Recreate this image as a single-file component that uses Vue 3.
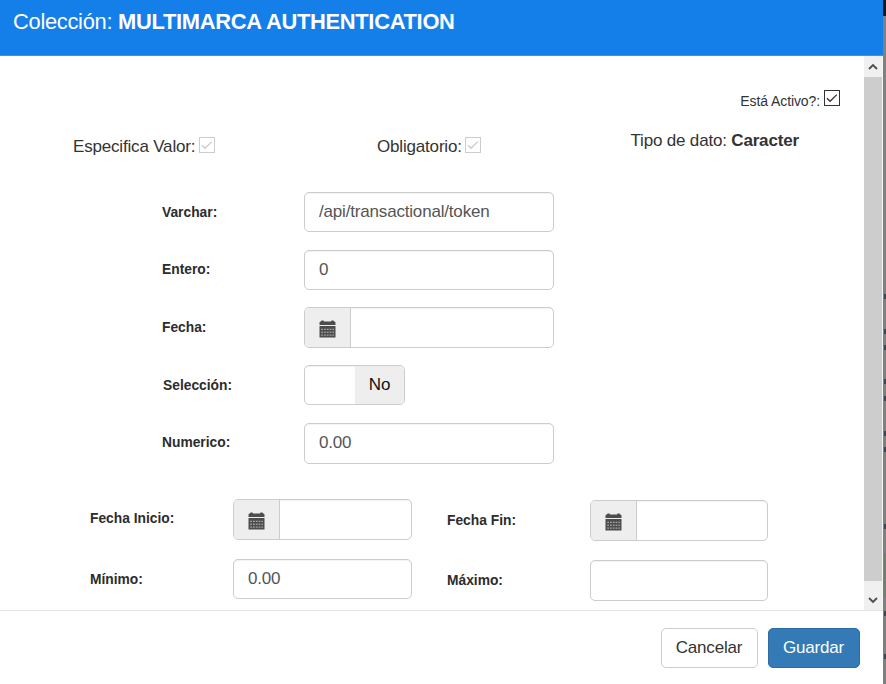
<script setup>
import { h } from 'vue'

const CalendarIcon = () =>
  h('svg', { width: 17, height: 18, viewBox: '0 0 17 18', fill: '#4d4d4d' }, [
    h('path', { d: 'M0.5 5V2.8Q0.5 1.5 1.8 1.5H2V1.2Q2 .4 3 .4H4Q5 .4 5 1.2V1.5H12V1.2Q12 .4 13 .4H14Q15 .4 15 1.2V1.5H15.2Q16.5 1.5 16.5 2.8V5Z' }),
    h('path', { d: 'M.5 6.1H16.5V17.5H.5Z' }),
    h('path', {
      d: 'M2.2 9.3H15M2.2 12.2H15M2.2 15.1H15',
      stroke: '#c4c4c4',
      'stroke-width': 0.9,
      'stroke-dasharray': '1.8 1',
      fill: 'none',
    }),
  ])

const CheckIcon = () =>
  h('svg', { width: 16, height: 16, viewBox: '0 0 16 16', fill: 'none', stroke: 'currentColor' }, [
    h('rect', { x: 0.5, y: 0.5, width: 15, height: 15 }),
    h('path', { d: 'M3 8.2L6.1 11.3L12.8 4.6', 'stroke-width': 1.3 }),
  ])

const backdropMarks = [296, 331, 347, 381, 398, 433, 449, 526, 571, 613, 656]
</script>

<template>
  <div class="page">
    <section class="modal">
      <header class="title"><span class="title-label">Colección:</span> <b>MULTIMARCA AUTHENTICATION</b></header>
      <div class="viewport">
        <main class="content">
          <div class="active"><span>Está Activo?:</span><CheckIcon class="check" /></div>
          <div class="flags">
            <div class="flag"><span>Especifica Valor:</span><CheckIcon class="check muted" /></div>
            <div class="flag required"><span>Obligatorio:</span><CheckIcon class="check muted" /></div>
            <div class="datatype">Tipo de dato: <b>Caracter</b></div>
          </div>
          <div class="fields">
            <label>Varchar:</label>
            <div class="control"><span class="value">/api/transactional/token</span></div>
            <label class="integer">Entero:</label>
            <div class="control"><span class="value">0</span></div>
            <label>Fecha:</label>
            <div class="control date tall"><i class="addon"><CalendarIcon /></i></div>
            <label class="selection">Selección:</label>
            <div class="control toggle"><span class="off">No</span></div>
            <label class="numeric">Numerico:</label>
            <div class="control tall"><span class="value">0.00</span></div>
          </div>
          <div class="ranges">
            <div class="range start">
              <label class="start-label">Fecha Inicio:</label>
              <div class="control date tall"><i class="addon"><CalendarIcon /></i></div>
              <label>Mínimo:</label>
              <div class="control"><span class="value">0.00</span></div>
            </div>
            <div class="range end">
              <label>Fecha Fin:</label>
              <div class="control date tall"><i class="addon"><CalendarIcon /></i></div>
              <label>Máximo:</label>
              <div class="control tall"></div>
            </div>
          </div>
        </main>
        <aside class="scrollbar">
          <div class="arrow up"><svg width="10" height="8" viewBox="0 0 10 8"><path d="M1 6L5 2L9 6" /></svg></div>
          <div class="thumb"></div>
          <div class="arrow down"><svg width="10" height="8" viewBox="0 0 10 8"><path d="M1 2L5 6L9 2" /></svg></div>
        </aside>
      </div>
      <footer class="actions">
        <button class="cancel">Cancelar</button>
        <button class="save">Guardar</button>
      </footer>
    </section>
    <svg class="backdrop" width="3" height="684" viewBox="0 0 3 684">
      <rect width="3" height="684" fill="#808080" />
      <rect width="3" height="16" fill="#17191e" />
      <rect v-for="y in backdropMarks" :key="y" x="1" :y="y - 2" width="2" height="5" fill="#42464d" />
      <rect x="1" y="553" width="2" height="44" fill="#71806c" />
    </svg>
  </div>
</template>

<style>
body { margin: 0; overflow: hidden; }
</style>

<style scoped>
* { box-sizing: border-box; }
.page {
  width: 886px;
  height: 684px;
  display: flex;
  overflow: hidden;
  background: #fff;
  color: #333;
  font: 17px/20px "Liberation Sans", Arial, sans-serif;
  letter-spacing: -0.18px;
}
.modal { width: 883px; display: flex; flex-direction: column; }
.title {
  height: 56px;
  padding: 9px 13px;
  background: #147ee9;
  border-bottom: 1px solid #3b90ea;
  color: #fff;
  font-size: 21.9px;
  line-height: 25px;
  letter-spacing: -0.3px;
  white-space: nowrap;
}
.viewport { height: 554px; display: flex; }
.content { width: 864px; overflow: hidden; }
.active {
  display: flex;
  justify-content: flex-end;
  gap: 4px;
  height: 60px;
  padding: 34px 24px 0 0;
  font-size: 14px;
  letter-spacing: -0.1px;
  line-height: 22px;
}
.check { flex: none; color: #333; }
.muted { color: #ccc; }
.flags { display: grid; grid-template-columns: 304px 253.5px 1fr; height: 76px; padding: 14px 0 0 73px; white-space: nowrap; }
.flag { display: flex; gap: 4px; padding-top: 7px; }
.required { gap: 3px; }
.flag span { line-height: 19px; }
.datatype { padding-top: 1px; }
.fields {
  display: grid;
  grid-template-columns: 142px 250px;
  grid-template-rows: 58px 57.4px 57.6px 58px 76px;
  padding-left: 162px;
}
label {
  font-size: 13.8px;
  font-weight: 700;
  line-height: 20px;
  letter-spacing: 0;
  padding-top: 10.6px;
  white-space: nowrap;
  color: #2c2c2c;
}
.integer, .numeric, .start-label { padding-top: 10px; }
.selection { padding-left: 1px; padding-top: 11px; }
.control {
  display: flex;
  align-items: center;
  height: 40px;
  border: 1px solid #ccc;
  border-radius: 5px;
  background: #fff;
  overflow: hidden;
  box-shadow: inset 0 1px 1px rgba(0, 0, 0, .05);
}
.tall { height: 41px; }
.value { padding-left: 14px; color: #555; }
.addon {
  width: 46px;
  height: 100%;
  display: flex;
  justify-content: center;
  align-items: center;
  padding: 3px 1px 0 0;
  background: #eee;
  border-right: 1px solid #ccc;
}
.toggle { width: 101px; justify-content: flex-end; }
.off { width: 49px; height: 100%; background: #eee; color: #111; text-align: center; line-height: 38px; }
.ranges { display: flex; align-items: flex-start; }
.range { display: grid; grid-template-rows: 60px 42px; }
.start { width: 412px; grid-template-columns: 143px 179px; padding-left: 90px; }
.end { width: 356px; grid-template-columns: 143px 178px; padding: 1px 0 0 35px; }
.scrollbar { width: 19px; border-right: 1px solid #f5f5f5; display: flex; flex-direction: column; background: #f0f0f0; }
.arrow { display: flex; justify-content: center; align-items: center; }
.arrow path { fill: none; stroke: #505050; stroke-width: 1.9; }
.up { height: 21px; }
.thumb { height: 504px; background: #cdcdcd; }
.down { height: 29px; padding-top: 9px; }
.actions {
  height: 74px;
  display: flex;
  justify-content: flex-end;
  gap: 10px;
  padding: 17px 23.5px 0 0;
  border-top: 1px solid #e5e5e5;
}
button { height: 40px; border: 1px solid #ccc; border-radius: 5px; padding: 0; font: inherit; letter-spacing: inherit; }
.cancel { width: 97px; background: #fff; color: #333; }
.save { width: 92px; background: #337ab7; border-color: #2e6da4; color: #fff; }
.backdrop { display: block; flex: none; }
</style>
